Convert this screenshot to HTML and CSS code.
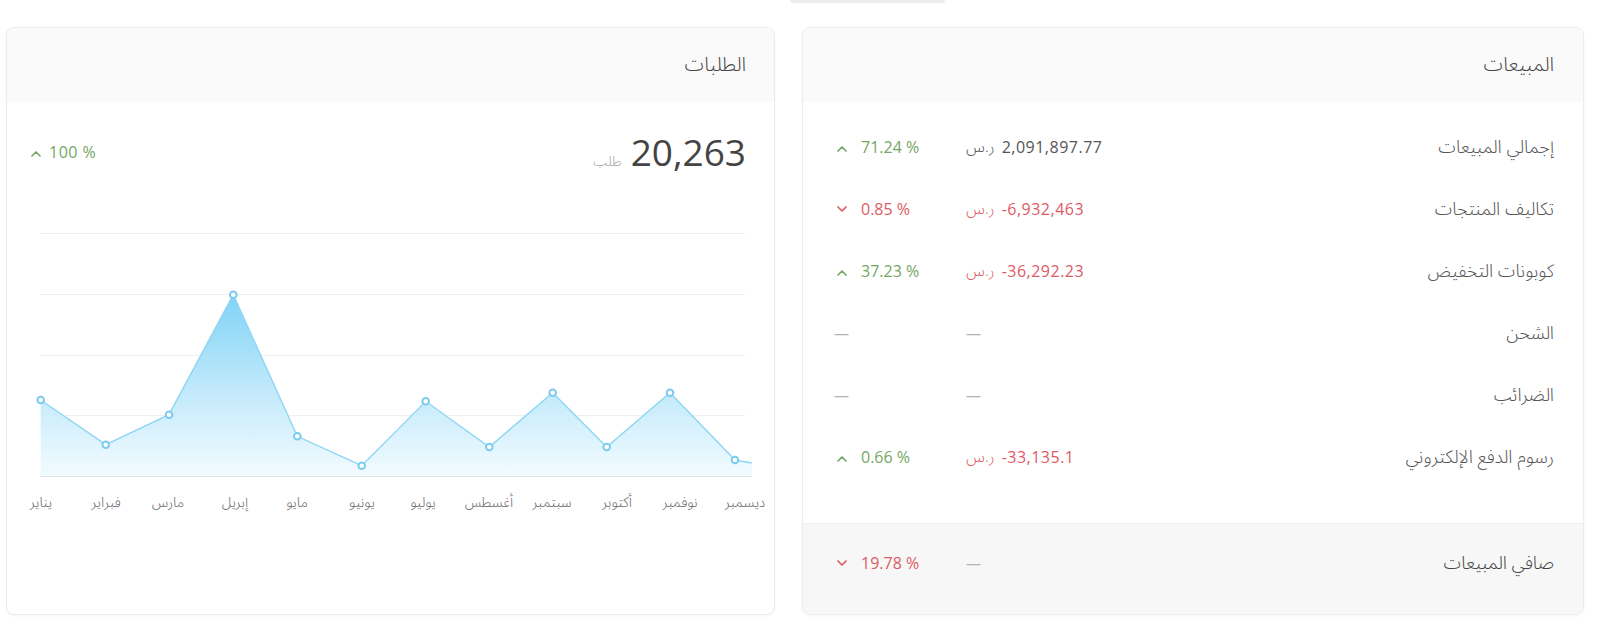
FILE: index.html
```html
<!DOCTYPE html>
<html lang="ar" dir="rtl">
<head>
<meta charset="utf-8">
<title>لوحة التقارير</title>
<link rel="stylesheet" href="styles.css">
</head>
<body>
<div class="topstrip"><div class="topstrip-bar"></div></div>
<main class="cards">
  <section class="card card-sales">
    <header class="card-head"><h2 class="card-title">المبيعات</h2></header>
    <div class="sales-body">
      <div class="srow">
        <div class="slabel">إجمالي المبيعات</div>
        <div class="sval"><span class="cur">ر.س</span><span class="num" dir="ltr">2,091,897.77</span></div>
        <div class="spct up"><svg class="chev" viewBox="0 0 10 6"><polyline points="1,5 5,1 9,5"/></svg><span dir="ltr">71.24 %</span></div>
      </div>
      <div class="srow">
        <div class="slabel">تكاليف المنتجات</div>
        <div class="sval neg"><span class="cur">ر.س</span><span class="num" dir="ltr">-6,932,463</span></div>
        <div class="spct down"><svg class="chev" viewBox="0 0 10 6"><polyline points="1,1 5,5 9,1"/></svg><span dir="ltr">0.85 %</span></div>
      </div>
      <div class="srow">
        <div class="slabel">كوبونات التخفيض</div>
        <div class="sval neg"><span class="cur">ر.س</span><span class="num" dir="ltr">-36,292.23</span></div>
        <div class="spct up"><svg class="chev" viewBox="0 0 10 6"><polyline points="1,5 5,1 9,5"/></svg><span dir="ltr">37.23 %</span></div>
      </div>
      <div class="srow">
        <div class="slabel">الشحن</div>
        <div class="sval"><span class="dash">—</span></div>
        <div class="spct"><span class="dash">—</span></div>
      </div>
      <div class="srow">
        <div class="slabel">الضرائب</div>
        <div class="sval"><span class="dash">—</span></div>
        <div class="spct"><span class="dash">—</span></div>
      </div>
      <div class="srow">
        <div class="slabel">رسوم الدفع الإلكتروني</div>
        <div class="sval neg"><span class="cur">ر.س</span><span class="num" dir="ltr">-33,135.1</span></div>
        <div class="spct up"><svg class="chev" viewBox="0 0 10 6"><polyline points="1,5 5,1 9,5"/></svg><span dir="ltr">0.66 %</span></div>
      </div>
    </div>
    <footer class="sales-foot">
      <div class="srow srow-foot">
        <div class="slabel">صافي المبيعات</div>
        <div class="sval"><span class="dash">—</span></div>
        <div class="spct down"><svg class="chev" viewBox="0 0 10 6"><polyline points="1,1 5,5 9,1"/></svg><span dir="ltr">19.78 %</span></div>
      </div>
    </footer>
  </section>

  <section class="card card-orders">
    <header class="card-head card-head-orders"><h2 class="card-title">الطلبات</h2></header>
    <div class="orders-body">
      <div class="stat">
        <div class="stat-main"><span class="stat-num" dir="ltr">20,263</span><span class="stat-unit">طلب</span></div>
        <div class="spct up stat-pct"><svg class="chev" viewBox="0 0 10 6"><polyline points="1,5 5,1 9,5"/></svg><span dir="ltr">100 %</span></div>
      </div>
      <svg class="chart" viewBox="0 0 767 350" width="767" height="350">
        <defs>
          <linearGradient id="areaFill" gradientUnits="userSpaceOnUse" x1="0" y1="118" x2="0" y2="300">
            <stop offset="0" stop-color="#7fd3f6"/>
            <stop offset="0.55" stop-color="#c4eafb"/>
            <stop offset="1" stop-color="#f2fbff"/>
          </linearGradient>
        </defs>
        <g class="grid">
          <line x1="33" y1="57.5" x2="738" y2="57.5"/>
          <line x1="33" y1="118.5" x2="738" y2="118.5"/>
          <line x1="33" y1="179.5" x2="738" y2="179.5"/>
          <line x1="33" y1="239.5" x2="738" y2="239.5"/>
        </g>
        <polygon class="area" points="33.7,224 98.7,268.7 162,238.7 226.3,118.7 290.3,260.3 354.7,289.7 418.7,225.3 482.3,271 545.7,216.7 599.7,271 663,216.7 728,284 744.7,287 744.7,300 33.7,300"/>
        <line class="baseline" x1="33" y1="300.5" x2="745" y2="300.5"/>
        <polyline class="line" points="33.7,224 98.7,268.7 162,238.7 226.3,118.7 290.3,260.3 354.7,289.7 418.7,225.3 482.3,271 545.7,216.7 599.7,271 663,216.7 728,284 744.7,287"/>
        <g class="pts">
          <circle cx="33.7" cy="224" r="3.3"/>
          <circle cx="98.7" cy="268.7" r="3.3"/>
          <circle cx="162" cy="238.7" r="3.3"/>
          <circle cx="226.3" cy="118.7" r="3.3"/>
          <circle cx="290.3" cy="260.3" r="3.3"/>
          <circle cx="354.7" cy="289.7" r="3.3"/>
          <circle cx="418.7" cy="225.3" r="3.3"/>
          <circle cx="482.3" cy="271" r="3.3"/>
          <circle cx="545.7" cy="216.7" r="3.3"/>
          <circle cx="599.7" cy="271" r="3.3"/>
          <circle cx="663" cy="216.7" r="3.3"/>
          <circle cx="728" cy="284" r="3.3"/>
        </g>
        <g class="xlabels">
          <text x="34" y="327">يناير</text>
          <text x="99" y="327">فبراير</text>
          <text x="161" y="327">مارس</text>
          <text x="228" y="327">إبريل</text>
          <text x="290" y="327">مايو</text>
          <text x="355" y="327">يونيو</text>
          <text x="416" y="327">يوليو</text>
          <text x="482" y="327">أغسطس</text>
          <text x="545" y="327">سبتمبر</text>
          <text x="610" y="327">أكتوبر</text>
          <text x="673" y="327">نوفمبر</text>
          <text x="738" y="327">ديسمبر</text>
        </g>
      </svg>
    </div>
  </section>
</main>
</body>
</html>
```

FILE: styles.css
```css
* { box-sizing: border-box; }

html, body {
  margin: 0;
  padding: 0;
  background: #ffffff;
}

body {
  width: 1600px;
  height: 634px;
  overflow: hidden;
  font-family: "Open Sans", "Noto Sans Arabic", "DejaVu Sans", sans-serif;
  color: #555555;
}

.topstrip {
  height: 4px;
  direction: ltr;
}

.topstrip-bar {
  margin-left: 790px;
  width: 155px;
  height: 3px;
  background: #ededed;
  border-radius: 0 0 4px 4px;
}

.cards {
  display: flex;
  padding: 23px 16px 0 6px;
  gap: 27px;
}

.card {
  background: #ffffff;
  border: 1px solid #ececec;
  border-radius: 8px;
  box-shadow: 0 1px 3px rgba(0, 0, 0, 0.04);
  height: 588px;
  display: flex;
  flex-direction: column;
  overflow: hidden;
}

.card-sales { width: 782px; }
.card-orders { width: 769px; }

.card-head {
  height: 74px;
  flex: none;
  background: #fafafa;
  display: flex;
  align-items: center;
  padding: 0 29px 0 31px;
}

.card-head-orders { padding: 0 28px 0 24px; }

.card-title {
  margin: 0;
  font-size: 20px;
  font-weight: 300;
  color: #474747;
  line-height: 28px;
  padding-bottom: 2px;
}

/* Sales table */
.sales-body {
  padding: 14px 29px 35px 31px;
  flex: none;
}

.srow {
  height: 62px;
  display: flex;
  align-items: center;
}

.slabel {
  flex: 1;
  text-align: right;
  font-size: 18px;
  font-weight: 300;
  color: #555555;
}

.sval {
  width: 300px;
  display: flex;
  direction: ltr;
  justify-content: flex-start;
  align-items: center;
  gap: 7px;
  font-size: 16px;
  color: #555555;
}

.sval .num { letter-spacing: 0.5px; }

.sval .cur { font-size: 16px; font-weight: 300; }

.neg { color: #dd5b64; }

.spct {
  width: 132px;
  display: flex;
  direction: ltr;
  justify-content: flex-start;
  align-items: center;
  gap: 14px;
  font-size: 16px;
}

.up { color: #74a764; }
.down { color: #dd5b64; }

.chev {
  width: 10px;
  height: 6px;
  margin-left: 3px;
  fill: none;
  stroke: currentColor;
  stroke-width: 1.7;
  stroke-linecap: round;
  stroke-linejoin: round;
}

.up .chev { margin-top: 3px; }

.dash {
  color: #b3b3b3;
  font-size: 15px;
}

.sales-foot {
  flex: 1;
  background: #f7f7f7;
  border-top: 1px solid #efefef;
  padding: 27px 29px 0 31px;
}

.srow-foot {
  height: 24px;
}

.srow-foot .slabel { color: #444444; }

/* Orders */
.orders-body {
  flex: 1;
  padding-top: 26px;
  display: flex;
  flex-direction: column;
}

.stat {
  height: 48px;
  padding: 0 28px 0 24px;
  display: flex;
  justify-content: space-between;
  align-items: center;
}

.stat-main {
  display: flex;
  align-items: baseline;
  gap: 9px;
}

.stat-num {
  font-size: 37px;
  color: #444444;
  line-height: 48px;
}

.stat-unit {
  font-size: 14px;
  font-weight: 300;
  color: #a8a8a8;
}

.stat-pct {
  width: auto;
  gap: 8px;
}

.stat-pct span { letter-spacing: 0.5px; }

.stat-pct .chev { margin-left: 0; }

.chart {
  display: block;
  flex: none;
}

.grid line {
  stroke: #f0f0f0;
  stroke-width: 1;
}

.baseline {
  stroke: #e2e2e2;
  stroke-width: 1;
}

.area { fill: url(#areaFill); }

.line {
  fill: none;
  stroke: #8fd6f4;
  stroke-width: 1.4;
}

.pts circle {
  fill: #ffffff;
  stroke: #7ccbef;
  stroke-width: 2;
}

.xlabels text {
  font-family: "Noto Sans Arabic", "DejaVu Sans", sans-serif;
  font-size: 14px;
  font-weight: 300;
  fill: #666666;
  text-anchor: middle;
  dominant-baseline: middle;
}
```
